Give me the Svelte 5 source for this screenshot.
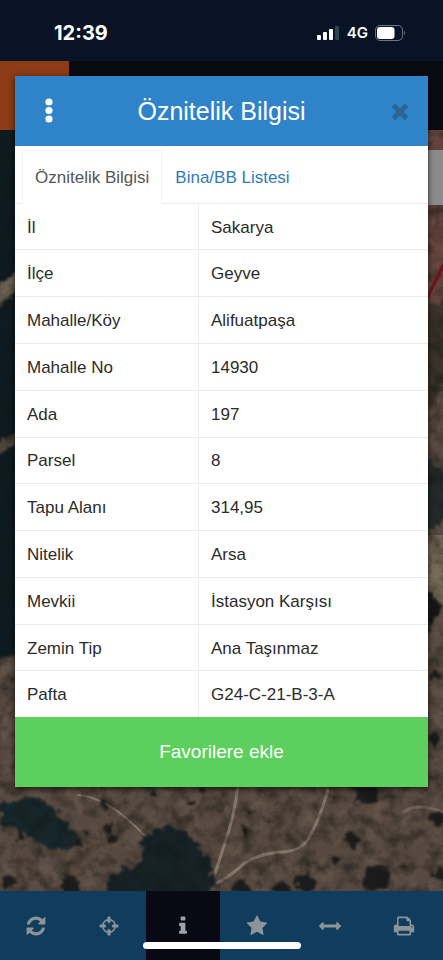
<script lang="ts">
	interface Attribute {
		label: string;
		value: string;
	}

	interface Tool {
		name: string;
		path: string;
	}

	const attributes: Attribute[] = [
		{ label: 'İl', value: 'Sakarya' },
		{ label: 'İlçe', value: 'Geyve' },
		{ label: 'Mahalle/Köy', value: 'Alifuatpaşa' },
		{ label: 'Mahalle No', value: '14930' },
		{ label: 'Ada', value: '197' },
		{ label: 'Parsel', value: '8' },
		{ label: 'Tapu Alanı', value: '314,95' },
		{ label: 'Nitelik', value: 'Arsa' },
		{ label: 'Mevkii', value: 'İstasyon Karşısı' },
		{ label: 'Zemin Tip', value: 'Ana Taşınmaz' },
		{ label: 'Pafta', value: 'G24-C-21-B-3-A' }
	];

	const tools: Tool[] = [
		{
			name: 'Yenile',
			path: 'M1639 1056q0 5-1 7-64 268-268 434.5t-478 166.5q-146 0-282.5-55t-243.5-157l-129 129q-19 19-45 19t-45-19-19-45v-448q0-26 19-45t45-19h448q26 0 45 19t19 45-19 45l-137 137q71 66 161 102t187 36q134 0 250-65t186-179q11-17 53-117 8-23 30-23h192q13 0 22.5 9.5t9.5 22.5zm25-800v448q0 26-19 45t-45 19h-448q-26 0-45-19t-19-45 19-45l138-138q-148-137-349-137-134 0-250 65t-186 179q-11 17-53 117-8 23-30 23h-199q-13 0-22.5-9.5t-9.5-22.5v-7q65-268 270-434.5t480-166.5q146 0 284 55.5t245 156.5l130-129q19-19 45-19t45 19 19 45z'
		},
		{
			name: 'Konum',
			path: 'M1325 1024h-109q-26 0-45-19t-19-45v-128q0-26 19-45t45-19h109q-32-108-112.5-188.5t-188.5-112.5v109q0 26-19 45t-45 19h-128q-26 0-45-19t-19-45v-109q-108 32-188.5 112.5t-112.5 188.5h109q26 0 45 19t19 45v128q0 26-19 45t-45 19h-109q32 108 112.5 188.5t188.5 112.5v-109q0-26 19-45t45-19h128q26 0 45 19t19 45v109q108-32 188.5-112.5t112.5-188.5zm339-192v128q0 26-19 45t-45 19h-143q-37 161-154.5 278.5t-278.5 154.5v143q0 26-19 45t-45 19h-128q-26 0-45-19t-19-45v-143q-161-37-278.5-154.5t-154.5-278.5h-143q-26 0-45-19t-19-45v-128q0-26 19-45t45-19h143q37-161 154.5-278.5t278.5-154.5v-143q0-26 19-45t45-19h128q26 0 45 19t19 45v143q161 37 278.5 154.5t154.5 278.5h143q26 0 45 19t19 45z'
		},
		{
			name: 'Bilgi',
			path: 'M1216 1344v128q0 26-19 45t-45 19h-512q-26 0-45-19t-19-45v-128q0-26 19-45t45-19h64v-384h-64q-26 0-45-19t-19-45v-128q0-26 19-45t45-19h384q26 0 45 19t19 45v576h64q26 0 45 19t19 45zm-128-1152v192q0 26-19 45t-45 19h-256q-26 0-45-19t-19-45v-192q0-26 19-45t45-19h256q26 0 45 19t19 45z'
		},
		{
			name: 'Favoriler',
			path: 'M1728 647q0 22-26 48l-363 354 86 500q1 7 1 20 0 21-10.5 35.5t-30.5 14.5q-19 0-40-12l-449-236-449 236q-22 12-40 12-21 0-31.5-14.5t-10.5-35.5q0-6 2-20l86-500-364-354q-25-27-25-48 0-37 56-46l502-73 225-455q19-41 49-41t49 41l225 455 502 73q56 9 56 46z'
		},
		{
			name: 'Ölçüm',
			path: 'M1792 896q0 26-19 45l-256 256q-19 19-45 19t-45-19-19-45v-128h-1024v128q0 26-19 45t-45 19-45-19l-256-256q-19-19-19-45t19-45l256-256q19-19 45-19t45 19 19 45v128h1024v-128q0-26 19-45t45-19 45 19l256 256q19 19 19 45z'
		},
		{
			name: 'Yazdır',
			path: 'M448 1536h896v-256h-896v256zm0-640h896v-384h-160q-40 0-68-28t-28-68v-160h-640v640zm1152 64q0-26-19-45t-45-19-45 19-19 45 19 45 45 19 45-19 19-45zm128 0v416q0 13-9.5 22.5t-22.5 9.5h-224v160q0 40-28 68t-68 28h-960q-40 0-68-28t-28-68v-160h-224q-13 0-22.5-9.5t-9.5-22.5v-416q0-79 56.5-135.5t135.5-56.5h64v-544q0-40 28-68t68-28h672q40 0 88 20t76 48l152 152q28 28 48 76t20 88v256h64q79 0 135.5 56.5t56.5 135.5z'
		}
	];

	// x, y, radius of the single bushes on the slope
	const bushes = [
		[21, 706, 4], [88, 701, 3], [79, 714, 4], [108, 698, 4], [112, 708, 5],
		[191, 672, 3], [201, 662, 3], [250, 682, 3], [353, 709, 7], [376, 749, 13],
		[305, 752, 10], [280, 759, 8], [241, 759, 9], [404, 738, 3], [70, 755, 9],
		[439, 688, 7], [440, 745, 6], [367, 661, 12], [155, 664, 3], [103, 673, 3],
		[10, 752, 6], [336, 730, 3], [436, 545, 5], [434, 610, 6], [246, 700, 3]
	];

	let activeTool = $state('Bilgi');
	let activeTab = $state('oznitelik');
</script>

<div class="screen">
	<header class="status-bar">
		<span class="time">12:39</span>
		<div class="status-icons">
			<svg width="23" height="14" viewBox="0 0 23 14" aria-hidden="true">
				<rect x="0" y="9" width="4" height="5" rx="1" fill="#fff" />
				<rect x="6" y="6" width="4" height="8" rx="1" fill="#fff" />
				<rect x="12" y="3" width="4" height="11" rx="1" fill="#fff" />
				<rect x="18" y="0" width="4" height="14" rx="1" fill="#2c4650" />
			</svg>
			<span class="network">4G</span>
			<svg width="31" height="16" viewBox="0 0 31 16" aria-hidden="true">
				<rect x="0.5" y="0.5" width="27" height="15" rx="4.5" fill="none" stroke="#6b7780" />
				<rect x="2" y="2" width="17.5" height="12" rx="3" fill="#fff" />
				<path d="M29 5.5q2 2.500 0 5z" fill="#6b7780" />
			</svg>
		</div>
	</header>

	<div class="app-bar">
		<div class="app-menu"></div>
	</div>

	<main class="map">
		<svg class="satellite" viewBox="0 0 443 761" preserveAspectRatio="xMidYMax slice" aria-hidden="true">
			<defs>
				<filter id="grain" x="0" y="0" width="100%" height="100%" color-interpolation-filters="sRGB">
					<feTurbulence type="fractalNoise" baseFrequency="0.07" numOctaves="4" seed="7" />
					<feColorMatrix values="0 0 0 0 0.08  0 0 0 0 0.09  0 0 0 0 0.08  1.6 0 0 0 -0.65" />
				</filter>
				<filter id="light" x="0" y="0" width="100%" height="100%" color-interpolation-filters="sRGB">
					<feTurbulence type="fractalNoise" baseFrequency="0.06" numOctaves="4" seed="21" />
					<feColorMatrix values="0 0 0 0 0.55  0 0 0 0 0.5  0 0 0 0 0.44  0 1.4 0 0 -0.6" />
				</filter>
				<filter id="rough" x="-20%" y="-20%" width="140%" height="140%">
					<feTurbulence type="fractalNoise" baseFrequency="0.12" numOctaves="3" seed="3" />
					<feDisplacementMap
						in="SourceGraphic"
						scale="14"
						xChannelSelector="R"
						yChannelSelector="G"
					/>
					<feGaussianBlur stdDeviation="0.8" />
				</filter>
			</defs>
			<rect width="443" height="761" fill="#57493f" />
			<path d="M400 0h43v230h-43z" fill="#64423b" />
			<path d="M400 405h43v70l-15-14z" fill="#776b56" />
			<rect width="443" height="761" filter="url(#light)" opacity="0.4" />
			<g fill="none" stroke="#86776a" stroke-linecap="round">
				<path d="M238 655q-3 30-15 64l-11 34" stroke-width="3" />
				<path d="M328 660q-8 28-18 46-6 14-27 16-30 2-44 16-12 10-24 16" stroke-width="3" />
				<path d="M78 665q30 2 66 40l28 10" stroke-width="2" />
				<path d="M404 682q12-10 39 0" stroke-width="3" opacity="0.6" />
			</g>
			<g filter="url(#rough)">
				<path d="M-20-20h50v540l-50 20z" fill="#0f1c20" />
				<path d="M-20 174l50-44v18l-50 44z" fill="#6b6051" />
				<path d="M-20 322l50-26v10l-50 26z" fill="#51493f" />
				<path d="M12 670q20-8 40 8t24 32q-12 20-30 6t-46-22v-20z" fill="#18272a" />
				<path d="M142 712q10-20 36-13 24 12 34 40l2 34H106q-2-34 22-34 20-4 14-27z" fill="#122225" />
				<path d="M425 175l22-5v80l-22 40z" fill="#3a302b" />
				<path d="M425 330l20 10v50l-20 15z" fill="#222c2b" />
				<path d="M426 462l16 12-14 30z" fill="#171817" />
				{#each bushes as [x, y, r]}
					<circle cx={x} cy={y} {r} fill="#1d1c1a" />
				{/each}
			</g>
			<rect width="443" height="761" filter="url(#grain)" opacity="0.8" />
			<path d="M444 134l-20 40" stroke="#6f1119" stroke-width="3" />
			<path d="M424 20h19v55h-19z" fill="#8b8b8b" />
		</svg>
	</main>

	<nav class="toolbar">
		{#each tools as tool}
			<button
				type="button"
				class="tool"
				class:active={activeTool === tool.name}
				aria-label={tool.name}
				onclick={() => (activeTool = tool.name)}
			>
				<svg width="22" height="22" viewBox="0 0 1792 1792" fill="currentColor" aria-hidden="true">
					<path d={tool.path} />
				</svg>
			</button>
		{/each}
		<div class="home-indicator"></div>
	</nav>

	<section class="dialog" role="dialog" aria-labelledby="dialog-title">
		<div class="dialog-header">
			<button type="button" class="icon-button" aria-label="Menü">
				<svg width="24" height="26" viewBox="0 0 24 26" fill="#fff" aria-hidden="true">
					<circle cx="12" cy="4" r="3.600" />
					<circle cx="12" cy="12.500" r="3.600" />
					<circle cx="12" cy="21" r="3.600" />
				</svg>
			</button>
			<h1 id="dialog-title">Öznitelik Bilgisi</h1>
			<button type="button" class="icon-button close" aria-label="Kapat">
				<svg width="24" height="24" viewBox="0 0 1792 1792" aria-hidden="true">
					<path
						fill="currentColor"
						d="M1490 1322q0 40-28 68l-136 136q-28 28-68 28t-68-28l-294-294-294 294q-28 28-68 28t-68-28l-136-136q-28-28-28-68t28-68l294-294-294-294q-28-28-28-68t28-68l136-136q28-28 68-28t68 28l294 294 294-294q28-28 68-28t68 28l136 136q28 28 28 68t-28 68l-294 294 294 294q28 28 28 68z"
					/>
				</svg>
			</button>
		</div>

		<div class="tabs" role="tablist">
			<button
				type="button"
				role="tab"
				class="tab"
				class:active={activeTab === 'oznitelik'}
				aria-selected={activeTab === 'oznitelik'}
				onclick={() => (activeTab = 'oznitelik')}>Öznitelik Bilgisi</button
			>
			<button
				type="button"
				role="tab"
				class="tab"
				class:active={activeTab === 'bina'}
				aria-selected={activeTab === 'bina'}
				onclick={() => (activeTab = 'bina')}>Bina/BB Listesi</button
			>
		</div>

		<table class="attributes">
			<tbody>
				{#each attributes as attribute}
					<tr>
						<th scope="row">{attribute.label}</th>
						<td>{attribute.value}</td>
					</tr>
				{/each}
			</tbody>
		</table>

		<button type="button" class="favorite">Favorilere ekle</button>
	</section>
</div>

<style>
	:global(body) {
		margin: 0;
		background: #0a0a12;
	}

	.screen {
		position: relative;
		display: flex;
		flex-direction: column;
		min-height: 100vh;
		overflow: hidden;
		font-family: 'Liberation Sans', Arial, sans-serif;
		font-size: 17px;
		line-height: 24px;
	}

	button {
		margin: 0;
		padding: 0;
		border: 0;
		background: none;
		font: inherit;
		cursor: pointer;
	}

	svg {
		display: block;
	}

	.status-bar {
		display: flex;
		align-items: center;
		justify-content: space-between;
		box-sizing: border-box;
		height: 61px;
		padding: 5px 37px 0 54px;
		background: #081325;
		color: #fff;
		font-family: Inter, sans-serif;
	}

	.time {
		font-size: 20px;
		font-weight: 700;
	}

	.status-icons {
		display: flex;
		align-items: center;
		gap: 7px;
	}

	.network {
		font-size: 15px;
		font-weight: 600;
	}

	.app-bar {
		height: 69px;
		background: #0a0a12;
	}

	.app-menu {
		width: 69px;
		height: 100%;
		background: #8d3c15;
	}

	.map {
		position: relative;
		flex: 1;
		min-height: 661px;
		background: #4f433c;
	}

	.satellite {
		position: absolute;
		inset: 0;
		width: 100%;
		height: 100%;
	}

	.toolbar {
		position: relative;
		display: grid;
		grid-template-columns: repeat(6, 1fr);
		height: 69px;
		margin-left: -1px;
		padding-right: 2px;
		background: #103c5e;
	}

	.tool {
		display: flex;
		align-items: center;
		justify-content: center;
		color: #8d9396;
	}

	.tool.active {
		background: #090914;
		color: #a0a3a5;
	}

	.home-indicator {
		position: absolute;
		left: 50%;
		bottom: 11px;
		width: 158px;
		height: 7px;
		margin-left: -78px;
		border-radius: 4px;
		background: #fff;
	}

	.dialog {
		position: absolute;
		top: 76px;
		left: 15px;
		right: 15px;
		background: #fff;
		box-shadow: 0 2px 6px rgba(0, 0, 0, 0.7);
	}

	.dialog-header {
		display: flex;
		align-items: center;
		justify-content: space-between;
		height: 70px;
		padding: 0 16px;
		background: #2f83c8;
	}

	h1 {
		margin: 0;
		color: #fff;
		font-size: 25px;
		font-weight: 400;
		line-height: 32px;
	}

	.icon-button {
		display: flex;
		justify-content: center;
		width: 36px;
	}

	.close {
		justify-content: flex-end;
		color: #2a6596;
	}

	.tabs {
		display: flex;
		box-sizing: border-box;
		height: 58px;
		padding: 4px 7px 0;
		border-bottom: 1px solid #ececec;
	}

	.tab {
		margin-bottom: -1px;
		padding: 2px 12px 0;
		border: 1px solid transparent;
		color: #337ab7;
	}

	.tab.active {
		border-color: #f4f4f4;
		border-bottom-color: #fff;
		color: #555;
	}

	.attributes {
		width: 100%;
		height: 513px;
		border-collapse: collapse;
		table-layout: fixed;
		color: #2b2b2b;
	}

	th,
	td {
		padding: 2px 12px 0;
		border-bottom: 1px solid #ebebeb;
		text-align: left;
		font-weight: 400;
	}

	th {
		width: 159px;
		border-right: 1px solid #ededed;
	}

	tr:last-child th,
	tr:last-child td {
		border-bottom: 0;
	}

	.favorite {
		display: block;
		width: 100%;
		height: 70px;
		background: #5dcf5d;
		color: #fff;
		font-size: 19px;
	}
</style>
